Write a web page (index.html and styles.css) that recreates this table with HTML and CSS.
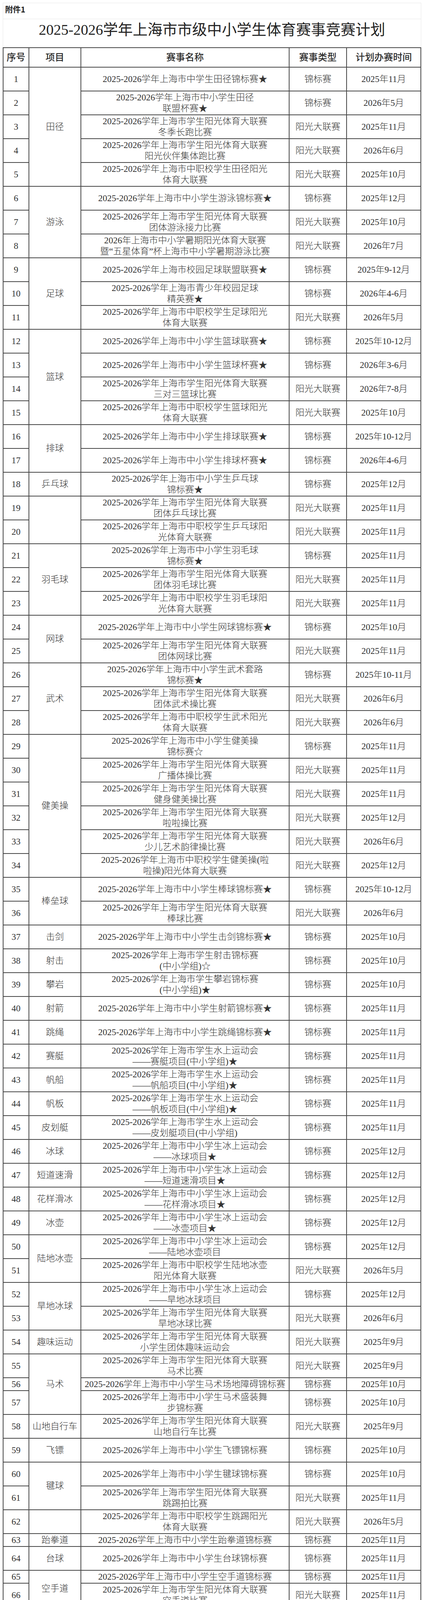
FILE: index.html
```html
<!DOCTYPE html>
<html lang="zh-CN">
<head>
<meta charset="utf-8">
<title>2025-2026学年上海市市级中小学生体育赛事竞赛计划</title>
<link rel="stylesheet" href="styles.css">
</head>
<body>
<div class="page">
  <div class="attach">附件1</div>
  <div class="title">2025-2026学年上海市市级中小学生体育赛事竞赛计划</div>
  <table class="plan">
    <colgroup>
      <col class="c1"><col class="c2"><col class="c3"><col class="c4"><col class="c5">
    </colgroup>
    <thead>
      <tr class="h"><th>序号</th><th>项目</th><th>赛事名称</th><th>赛事类型</th><th>计划办赛时间</th></tr>
    </thead>
    <tbody>
      <tr><td>1</td><td rowspan="5">田径</td><td>2025-2026学年上海市中学生田径锦标赛★</td><td>锦标赛</td><td>2025年11月</td></tr>
      <tr><td>2</td><td>2025-2026学年上海市中小学生田径<br>联盟杯赛★</td><td>锦标赛</td><td>2026年5月</td></tr>
      <tr><td>3</td><td>2025-2026学年上海市学生阳光体育大联赛<br>冬季长跑比赛</td><td>阳光大联赛</td><td>2025年11月</td></tr>
      <tr><td>4</td><td>2025-2026学年上海市学生阳光体育大联赛<br>阳光伙伴集体跑比赛</td><td>阳光大联赛</td><td>2026年6月</td></tr>
      <tr><td>5</td><td>2025-2026学年上海市中职校学生田径阳光<br>体育大联赛</td><td>阳光大联赛</td><td>2025年10月</td></tr>

      <tr><td>6</td><td rowspan="3">游泳</td><td>2025-2026学年上海市中小学生游泳锦标赛★</td><td>锦标赛</td><td>2025年12月</td></tr>
      <tr><td>7</td><td>2025-2026学年上海市学生阳光体育大联赛<br>团体游泳接力比赛</td><td>阳光大联赛</td><td>2025年10月</td></tr>
      <tr><td>8</td><td>2026年上海市中小学暑期阳光体育大联赛<br>暨“五星体育”杯上海市中小学暑期游泳比赛</td><td>阳光大联赛</td><td>2026年7月</td></tr>

      <tr><td>9</td><td rowspan="3">足球</td><td>2025-2026学年上海市校园足球联盟联赛★</td><td>锦标赛</td><td>2025年9-12月</td></tr>
      <tr><td>10</td><td>2025-2026学年上海市青少年校园足球<br>精英赛★</td><td>锦标赛</td><td>2026年4-6月</td></tr>
      <tr><td>11</td><td>2025-2026学年上海市中职校学生足球阳光<br>体育大联赛</td><td>阳光大联赛</td><td>2026年5月</td></tr>

      <tr><td>12</td><td rowspan="4">篮球</td><td>2025-2026学年上海市中小学生篮球联赛★</td><td>锦标赛</td><td>2025年10-12月</td></tr>
      <tr><td>13</td><td>2025-2026学年上海市中小学生篮球杯赛★</td><td>锦标赛</td><td>2026年3-6月</td></tr>
      <tr><td>14</td><td>2025-2026学年上海市学生阳光体育大联赛<br>三对三篮球比赛</td><td>阳光大联赛</td><td>2026年7-8月</td></tr>
      <tr><td>15</td><td>2025-2026学年上海市中职校学生篮球阳光<br>体育大联赛</td><td>阳光大联赛</td><td>2025年10月</td></tr>

      <tr><td>16</td><td rowspan="2">排球</td><td>2025-2026学年上海市中小学生排球联赛★</td><td>锦标赛</td><td>2025年10-12月</td></tr>
      <tr><td>17</td><td>2025-2026学年上海市中小学生排球杯赛★</td><td>锦标赛</td><td>2026年4-6月</td></tr>

      <tr><td>18</td><td>乒乓球</td><td>2025-2026学年上海市中小学生乒乓球<br>锦标赛★</td><td>锦标赛</td><td>2025年12月</td></tr>
      <tr><td>19</td><td rowspan="2"></td><td>2025-2026学年上海市学生阳光体育大联赛<br>团体乒乓球比赛</td><td>阳光大联赛</td><td>2025年11月</td></tr>
      <tr><td>20</td><td>2025-2026学年上海市中职校学生乒乓球阳<br>光体育大联赛</td><td>阳光大联赛</td><td>2025年11月</td></tr>

      <tr><td>21</td><td rowspan="3">羽毛球</td><td>2025-2026学年上海市中小学生羽毛球<br>锦标赛★</td><td>锦标赛</td><td>2025年11月</td></tr>
      <tr><td>22</td><td>2025-2026学年上海市学生阳光体育大联赛<br>团体羽毛球比赛</td><td>阳光大联赛</td><td>2025年11月</td></tr>
      <tr><td>23</td><td>2025-2026学年上海市中职校学生羽毛球阳<br>光体育大联赛</td><td>阳光大联赛</td><td>2025年11月</td></tr>

      <tr><td>24</td><td rowspan="2">网球</td><td>2025-2026学年上海市中小学生网球锦标赛★</td><td>锦标赛</td><td>2025年10月</td></tr>
      <tr><td>25</td><td>2025-2026学年上海市学生阳光体育大联赛<br>团体网球比赛</td><td>阳光大联赛</td><td>2025年11月</td></tr>

      <tr><td>26</td><td rowspan="3">武术</td><td>2025-2026学年上海市中小学生武术套路<br>锦标赛★</td><td>锦标赛</td><td>2025年10-11月</td></tr>
      <tr><td>27</td><td>2025-2026学年上海市学生阳光体育大联赛<br>团体武术操比赛</td><td>阳光大联赛</td><td>2026年6月</td></tr>
      <tr><td>28</td><td>2025-2026学年上海市中职校学生武术阳光<br>体育大联赛</td><td>阳光大联赛</td><td>2026年6月</td></tr>

      <tr><td>29</td><td rowspan="6">健美操</td><td>2025-2026学年上海市中小学生健美操<br>锦标赛☆</td><td>锦标赛</td><td>2025年11月</td></tr>
      <tr><td>30</td><td>2025-2026学年上海市学生阳光体育大联赛<br>广播体操比赛</td><td>阳光大联赛</td><td>2025年11月</td></tr>
      <tr><td>31</td><td>2025-2026学年上海市学生阳光体育大联赛<br>健身健美操比赛</td><td>阳光大联赛</td><td>2025年11月</td></tr>
      <tr><td>32</td><td>2025-2026学年上海市学生阳光体育大联赛<br>啦啦操比赛</td><td>阳光大联赛</td><td>2025年12月</td></tr>
      <tr><td>33</td><td>2025-2026学年上海市学生阳光体育大联赛<br>少儿艺术韵律操比赛</td><td>阳光大联赛</td><td>2026年6月</td></tr>
      <tr><td>34</td><td>2025-2026学年上海市中职校学生健美操(啦<br>啦操)阳光体育大联赛</td><td>阳光大联赛</td><td>2025年12月</td></tr>

      <tr><td>35</td><td rowspan="2">棒垒球</td><td>2025-2026学年上海市中小学生棒球锦标赛★</td><td>锦标赛</td><td>2025年10-12月</td></tr>
      <tr><td>36</td><td>2025-2026学年上海市学生阳光体育大联赛<br>棒球比赛</td><td>阳光大联赛</td><td>2026年6月</td></tr>

      <tr><td>37</td><td>击剑</td><td>2025-2026学年上海市中小学生击剑锦标赛★</td><td>锦标赛</td><td>2025年10月</td></tr>
      <tr><td>38</td><td>射击</td><td>2025-2026学年上海市学生射击锦标赛<br>(中小学组)☆</td><td>锦标赛</td><td>2025年10月</td></tr>
      <tr><td>39</td><td>攀岩</td><td>2025-2026学年上海市学生攀岩锦标赛<br>(中小学组)★</td><td>锦标赛</td><td>2025年10月</td></tr>
      <tr><td>40</td><td>射箭</td><td>2025-2026学年上海市中小学生射箭锦标赛★</td><td>锦标赛</td><td>2025年11月</td></tr>
      <tr><td>41</td><td>跳绳</td><td>2025-2026学年上海市中小学生跳绳锦标赛★</td><td>锦标赛</td><td>2025年11月</td></tr>
      <tr><td>42</td><td>赛艇</td><td>2025-2026学年上海市学生水上运动会<br>——赛艇项目(中小学组)★</td><td>锦标赛</td><td>2025年11月</td></tr>
      <tr><td>43</td><td>帆船</td><td>2025-2026学年上海市学生水上运动会<br>——帆船项目(中小学组)★</td><td>锦标赛</td><td>2025年11月</td></tr>
      <tr><td>44</td><td>帆板</td><td>2025-2026学年上海市学生水上运动会<br>——帆板项目(中小学组)★</td><td>锦标赛</td><td>2025年11月</td></tr>
      <tr><td>45</td><td>皮划艇</td><td>2025-2026学年上海市学生水上运动会<br>——皮划艇项目(中小学组)</td><td>锦标赛</td><td>2025年11月</td></tr>
      <tr><td>46</td><td>冰球</td><td>2025-2026学年上海市中小学生冰上运动会<br>——冰球项目★</td><td>锦标赛</td><td>2025年12月</td></tr>
      <tr><td>47</td><td>短道速滑</td><td>2025-2026学年上海市中小学生冰上运动会<br>——短道速滑项目★</td><td>锦标赛</td><td>2025年12月</td></tr>
      <tr><td>48</td><td>花样滑冰</td><td>2025-2026学年上海市中小学生冰上运动会<br>——花样滑冰项目★</td><td>锦标赛</td><td>2025年12月</td></tr>
      <tr><td>49</td><td>冰壶</td><td>2025-2026学年上海市中小学生冰上运动会<br>——冰壶项目★</td><td>锦标赛</td><td>2025年12月</td></tr>

      <tr><td>50</td><td rowspan="2">陆地冰壶</td><td>2025-2026学年上海市中小学生冰上运动会<br>——陆地冰壶项目</td><td>锦标赛</td><td>2025年12月</td></tr>
      <tr><td>51</td><td>2025-2026学年上海市中职校学生陆地冰壶<br>阳光体育大联赛</td><td>阳光大联赛</td><td>2026年5月</td></tr>

      <tr><td>52</td><td rowspan="2">旱地冰球</td><td>2025-2026学年上海市中小学生冰上运动会<br>——旱地冰球项目</td><td>锦标赛</td><td>2025年12月</td></tr>
      <tr><td>53</td><td>2025-2026学年上海市学生阳光体育大联赛<br>旱地冰球比赛</td><td>阳光大联赛</td><td>2026年6月</td></tr>

      <tr><td>54</td><td>趣味运动</td><td>2025-2026学年上海市学生阳光体育大联赛<br>小学生团体趣味运动会</td><td>阳光大联赛</td><td>2025年9月</td></tr>

      <tr><td>55</td><td rowspan="3">马术</td><td>2025-2026学年上海市学生阳光体育大联赛<br>马术比赛</td><td>阳光大联赛</td><td>2025年9月</td></tr>
      <tr class="s"><td>56</td><td>2025-2026学年上海市中小学生马术场地障碍锦标赛</td><td>锦标赛</td><td>2025年10月</td></tr>
      <tr><td>57</td><td>2025-2026学年上海市中小学生马术盛装舞<br>步锦标赛</td><td>锦标赛</td><td>2025年10月</td></tr>

      <tr><td>58</td><td>山地自行车</td><td>2025-2026学年上海市学生阳光体育大联赛<br>山地自行车比赛</td><td>阳光大联赛</td><td>2025年9月</td></tr>
      <tr><td>59</td><td>飞镖</td><td>2025-2026学年上海市中小学生飞镖锦标赛</td><td>锦标赛</td><td>2025年10月</td></tr>

      <tr><td>60</td><td rowspan="2">毽球</td><td>2025-2026学年上海市中小学生毽球锦标赛</td><td>锦标赛</td><td>2025年10月</td></tr>
      <tr><td>61</td><td>2025-2026学年上海市学生阳光体育大联赛<br>跳踢拍比赛</td><td>阳光大联赛</td><td>2025年11月</td></tr>
      <tr><td>62</td><td></td><td>2025-2026学年上海市中职校学生跳踢阳光<br>体育大联赛</td><td>阳光大联赛</td><td>2026年5月</td></tr>

      <tr class="s"><td>63</td><td>跆拳道</td><td>2025-2026学年上海市中小学生跆拳道锦标赛</td><td>锦标赛</td><td>2025年11月</td></tr>
      <tr><td>64</td><td>台球</td><td>2025-2026学年上海市中小学生台球锦标赛</td><td>锦标赛</td><td>2025年11月</td></tr>

      <tr class="s"><td>65</td><td rowspan="2">空手道</td><td>2025-2026学年上海市中小学生空手道锦标赛</td><td>锦标赛</td><td>2025年11月</td></tr>
      <tr><td>66</td><td>2025-2026学年上海市学生阳光体育大联赛<br>空手道比赛</td><td>阳光大联赛</td><td>2025年11月</td></tr>

      <tr><td>67</td><td rowspan="2">保龄球</td><td>2025-2026学年上海市学生阳光体育大联赛<br>保龄球比赛</td><td>阳光大联赛</td><td>2025年10月</td></tr>
      <tr class="s"><td>68</td><td>2025-2026学年上海市中小学生保龄球锦标赛</td><td>锦标赛</td><td>2025年11月</td></tr>

      <tr><td>69</td><td rowspan="2">围棋</td><td>2025-2026学年上海市学生智力运动会<br>——围棋项目(中小学组)</td><td>锦标赛</td><td>2025年11月</td></tr>
      <tr><td>70</td><td>2025-2026学年上海市中职校学生围棋阳光<br>体育大联赛</td><td>阳光大联赛</td><td>2025年10月</td></tr>

      <tr><td>71</td><td rowspan="2">象棋</td><td>2025-2026学年上海市学生智力运动会<br>——象棋项目(中小学组)</td><td>锦标赛</td><td>2025年11月</td></tr>
      <tr><td>72</td><td>2025-2026学年上海市中职校学生象棋阳光<br>体育大联赛</td><td>阳光大联赛</td><td>2025年10月</td></tr>

      <tr><td>73</td><td rowspan="2">国际象棋</td><td>2025-2026学年上海市学生智力运动会<br>——国际象棋项目(中小学组)</td><td>锦标赛</td><td>2025年11月</td></tr>
      <tr><td>74</td><td>2025-2026学年上海市中职校学生国际象棋<br>阳光体育大联赛</td><td>阳光大联赛</td><td>2025年10月</td></tr>

      <tr><td>75</td><td>国际跳棋</td><td>2025-2026学年上海市学生智力运动会<br>——国际跳棋项目(中小学组)</td><td>锦标赛</td><td>2025年11月</td></tr>

      <tr><td>76</td><td rowspan="2">五子棋</td><td>2025-2026学年上海市学生智力运动会<br>——五子棋项目(中小学组)</td><td>锦标赛</td><td>2025年11月</td></tr>
      <tr><td>77</td><td>2025-2026学年上海市中职校学生五子棋阳<br>光体育大联赛</td><td>阳光大联赛</td><td>2025年10月</td></tr>

      <tr><td>78</td><td rowspan="2">桥牌</td><td>2025-2026学年上海市学生智力运动会<br>——桥牌项目(中小学组)</td><td>锦标赛</td><td>2025年11月</td></tr>
      <tr><td>79</td><td>2025-2026学年上海市学生阳光体育大联赛<br>团体桥牌比赛</td><td>阳光大联赛</td><td>2026年6月</td></tr>

      <tr><td>80</td><td>壁球</td><td>2025-2026学年上海市学生壁球锦标赛<br>(中小学组)</td><td>锦标赛</td><td>2025年11月</td></tr>
      <tr class="s"><td>81</td><td>高尔夫</td><td>2025-2026学年上海市中小学生高尔夫锦标赛</td><td>锦标赛</td><td>2025年11月</td></tr>
      <tr><td>82</td><td>定向越野</td><td>2025-2026学年上海市学生阳光体育大联赛<br>趣味定向越野比赛</td><td>阳光大联赛</td><td>2025年11月</td></tr>
      <tr><td>83</td><td>体育舞蹈</td><td>2025-2026学年上海市学生阳光体育大联赛<br>体育舞蹈比赛</td><td>阳光大联赛</td><td>2025年11月</td></tr>
      <tr><td>84</td><td>匹克球</td><td>2025-2026学年上海市学生阳光体育大联赛<br>匹克球比赛</td><td>阳光大联赛</td><td>2026年5月</td></tr>
      <tr><td>85</td><td>腰旗橄榄球</td><td>2025-2026学年上海市学生阳光体育大联赛<br>腰旗橄榄球比赛</td><td>阳光大联赛</td><td>2026年5月</td></tr>
      <tr><td>86</td><td>体操</td><td>2025-2026学年上海市中小学生体操锦标赛</td><td>锦标赛</td><td>2026年5月</td></tr>
      <tr><td>87</td><td>广播操</td><td>2025-2026学年上海市中职校学生广播操阳<br>光体育大联赛</td><td>阳光大联赛</td><td>2026年4月</td></tr>
      <tr><td>88</td><td>简化太极拳</td><td>2025-2026学年上海市中职校学生简化太极<br>拳阳光体育大联赛</td><td>阳光大联赛</td><td>2026年6月</td></tr>
    </tbody>
  </table>
  <div class="notes">
    <p class="zhu">注：</p>
    <p><span class="l1"><b>1.</b>标“★”赛事的全部小项(项目)纳入可申请上海市初中毕业升学体育考试统一考试免考赛事范</span><span class="l2">围。</span></p>
    <p><span class="l1"><b>2.</b>标“☆”赛事中的部分小项(项目)纳入可申请上海市体育中考统一考试免考赛事范围，详见各</span><span class="l2">竞赛规程。</span></p>
    <p class="last"><b>3.</b>参赛资格</p>
  </div>
</div>
</body>
</html>
```
FILE: styles.css
```css
* { box-sizing: border-box; }
html, body { margin: 0; padding: 0; background: #fff; }
body {
  font-family: "Liberation Serif", "Noto Sans CJK SC", serif;
  color: #333;
}
.page {
  width: 1071px;
  margin: 7px 0 0 7px;
}
.attach {
  height: 41px;
  border: 1px solid #e8e8e8;
  border-bottom: none;
  padding-left: 5px;
  font-family: "Noto Sans CJK SC", sans-serif;
  font-weight: 700;
  font-size: 20px;
  line-height: 32px;
  color: #222;
}
.title {
  height: 73px;
  border: 1px solid #e8e8e8;
  border-bottom: none;
  text-align: center;
  font-size: 38px;
  line-height: 54px;
  font-weight: 400;
  color: #222;
}
.plan {
  width: 1071px;
  border-collapse: separate;
  border-spacing: 0;
  table-layout: fixed;
  border-top: 2px solid #474747;
  border-left: 2px solid #474747;
}
.c1 { width: 66px; }
.c2 { width: 133px; }
.c3 { width: 533px; }
.c4 { width: 147px; }
.c5 { width: 190px; }
.plan th, .plan td {
  border-right: 2px solid #474747;
  border-bottom: 2px solid #474747;
  padding: 0 2px;
  text-align: center;
  vertical-align: middle;
  white-space: nowrap;
  overflow: hidden;
}
.plan td {
  font-size: 23px;
  line-height: 28px;
  font-weight: 300;
  color: #333;
}
.plan th {
  font-size: 24px;
  line-height: 30px;
  font-weight: 500;
  color: #2a2a2a;
}
.plan tr { height: 61px; }
.plan tr.h { height: 50px; }
.plan tr.s { height: 33px; }
.notes {
  border-left: 1px solid #dcdcdc;
  border-right: 1px solid #dcdcdc;
  font-family: "Noto Sans CJK SC", sans-serif;
  font-size: 23px;
  font-weight: 300;
  color: #333;
}
.notes p {
  margin: 0;
  padding: 9px 8px 2px 5px;
  line-height: 32px;
  border-bottom: 2px solid #f0f0f0;
}
.notes p.zhu {
  padding-top: 6px;
  padding-bottom: 0;
  line-height: 30px;
  height: 36px;
}
.notes p.last { border-bottom: none; }
.notes b { font-weight: 700; color: #222; }
.l1 {
  display: block;
  text-align: justify;
  text-align-last: justify;
}
.l2 { display: block; }
```
